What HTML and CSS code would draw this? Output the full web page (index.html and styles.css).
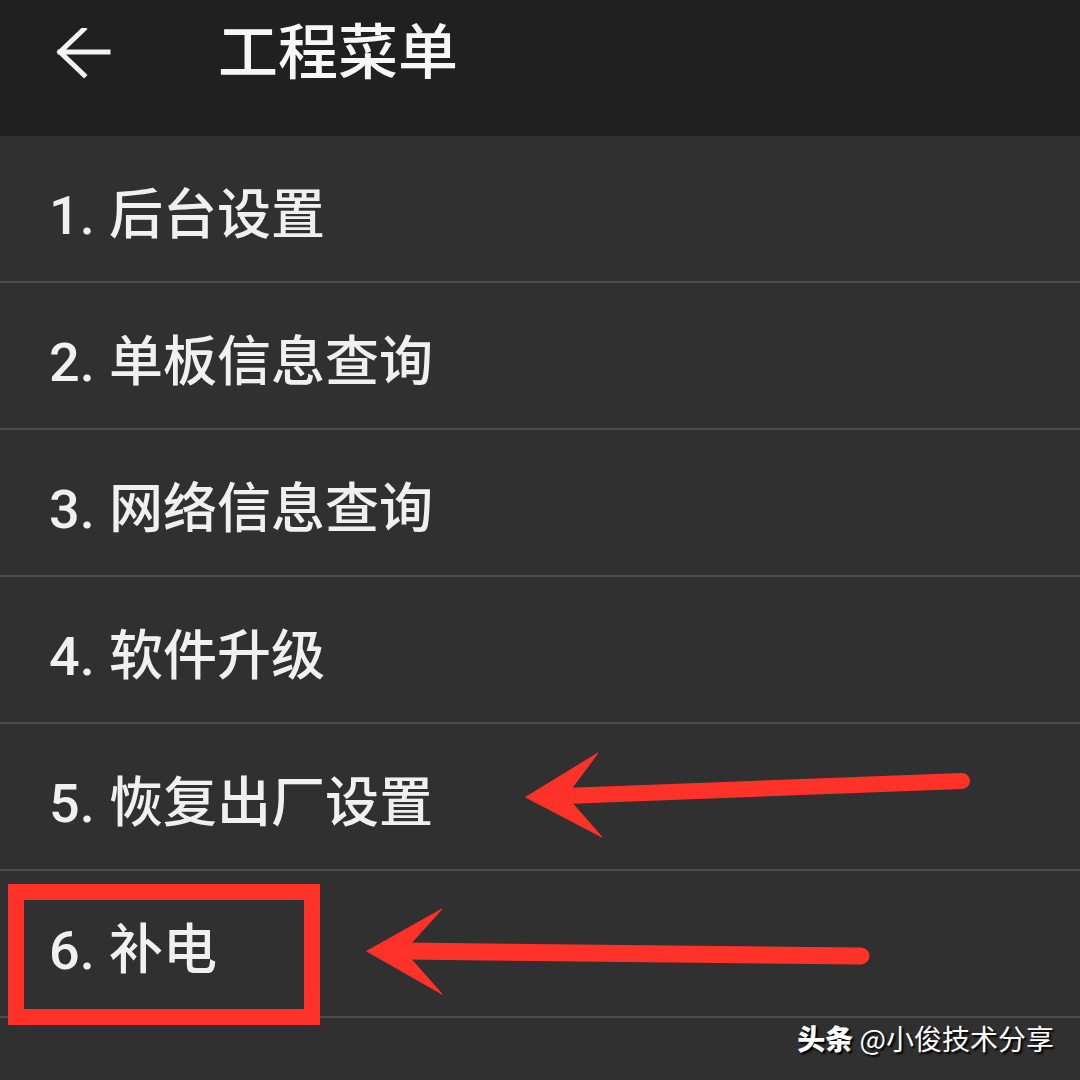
FILE: index.html
```html
<!DOCTYPE html>
<html lang="zh-CN">
<head>
    <meta charset="UTF-8">
    <meta name="viewport" content="width=device-width, initial-scale=1.0">
    <title>工程菜单</title>
    <link rel="stylesheet" href="styles.css">
</head>
<body>
    <div class="screen">
        <header class="appbar">
            <svg class="back-icon" width="60" height="60" viewBox="0 0 60 60">
                <path d="M4 24 H52 M28 1 L4 24 L28 47" fill="none" stroke="#f4f4f4" stroke-width="5" stroke-linecap="square"/>
            </svg>
            <h1 class="title">工程菜单</h1>
        </header>

        <ul class="menu">
            <li class="menu-item">1. 后台设置</li>
            <li class="menu-item">2. 单板信息查询</li>
            <li class="menu-item">3. 网络信息查询</li>
            <li class="menu-item">4. 软件升级</li>
            <li class="menu-item">5. 恢复出厂设置</li>
            <li class="menu-item">6. 补电</li>
        </ul>

        <!-- annotations drawn over the screenshot -->
        <div class="mark-box"></div>
        <svg class="marks" width="1080" height="1080" viewBox="0 0 1080 1080">
            <g fill="#ff3229" stroke="#ff3229" stroke-linecap="round">
                <line x1="565" y1="796" x2="962" y2="781" stroke-width="16"/>
                <path d="M526 797 L598 753 L566 796 L602 837 Z" stroke-width="1"/>
                <line x1="404" y1="951" x2="861" y2="956" stroke-width="17"/>
                <path d="M367 951 L442 909 L404 951 L442 994 Z" stroke-width="1"/>
            </g>
        </svg>
        <div class="watermark"><b>头条</b> @小俊技术分享</div>
    </div>
</body>
</html>
```

FILE: styles.css
```css
body {
    margin: 0;
    background-color: #303030;
    font-family: Roboto, "Noto Sans CJK SC", sans-serif;
    color: #f2f2f2;
}

.screen {
    position: relative;
    width: 1080px;
    height: 1080px;
    overflow: hidden;
    background-color: #303030;
}

.appbar {
    height: 136px;
    background-color: #202020;
    display: flex;
    align-items: flex-start;
    padding-left: 56px;
    box-sizing: border-box;
}

.back-icon {
    margin-top: 28px;
}

.title {
    margin: 14px 0 0 102px;
    font-size: 60px;
    font-weight: 500;
    line-height: 80px;
    color: #f7f7f7;
}

.menu {
    list-style: none;
    margin: 0;
    padding: 0;
}

.menu-item {
    height: 141px;
    padding-top: 4px;
    padding-left: 49px;
    border-bottom: 2px solid #4c4c4c;
    display: flex;
    align-items: center;
    font-size: 54px;
    font-weight: 500;
    word-spacing: 1px;
    color: #f0f0f0;
}

.mark-box {
    position: absolute;
    left: 8px;
    top: 884px;
    width: 280px;
    height: 109px;
    border: 16px solid #ff3229;
}

.marks {
    position: absolute;
    left: 0;
    top: 0;
    pointer-events: none;
}

.watermark {
    position: absolute;
    right: 26px;
    bottom: 22px;
    font-family: "Noto Sans CJK SC", sans-serif;
    font-size: 28px;
    color: #ffffff;
    text-shadow: 2px 2px 2px #000;
}

.watermark b {
    font-weight: 900;
}
```
